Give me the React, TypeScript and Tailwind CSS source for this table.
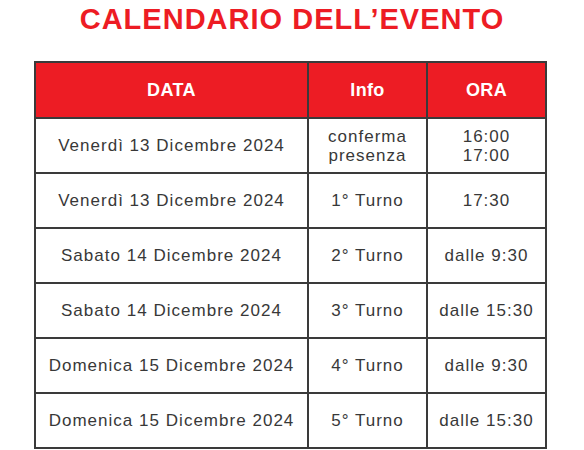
import React from "react";

const rows: { date: string; info: string[]; ora: string[] }[] = [
  { date: "Venerdì 13 Dicembre 2024", info: ["conferma", "presenza"], ora: ["16:00", "17:00"] },
  { date: "Venerdì 13 Dicembre 2024", info: ["1° Turno"], ora: ["17:30"] },
  { date: "Sabato 14 Dicembre 2024", info: ["2° Turno"], ora: ["dalle 9:30"] },
  { date: "Sabato 14 Dicembre 2024", info: ["3° Turno"], ora: ["dalle 15:30"] },
  { date: "Domenica 15 Dicembre 2024", info: ["4° Turno"], ora: ["dalle 9:30"] },
  { date: "Domenica 15 Dicembre 2024", info: ["5° Turno"], ora: ["dalle 15:30"] },
];

export default function App() {
  return (
    <div
      className="w-[584px] h-[450px] bg-white overflow-hidden"
      style={{ fontFamily: '"Liberation Sans", Arial, sans-serif' }}
    >
      <h1 className="pt-[3px] text-center text-[29px] leading-[32px] font-bold text-[#ed1c24] tracking-[0.035em]">
        CALENDARIO DELL’EVENTO
      </h1>
      <table className="ml-[34px] mt-[26px] w-[513px] border-collapse table-fixed">
        <colgroup>
          <col className="w-[273px]" />
          <col className="w-[119px]" />
          <col className="w-[119px]" />
        </colgroup>
        <thead>
          <tr className="h-[56px] bg-[#ed1c24] text-white">
            <th className="border-2 border-[#3a3a3a] text-[18px] font-bold tracking-[0.02em]">DATA</th>
            <th className="border-2 border-[#3a3a3a] text-[18px] font-bold tracking-[0.02em]">Info</th>
            <th className="border-2 border-[#3a3a3a] text-[18px] font-bold tracking-[0.02em]">ORA</th>
          </tr>
        </thead>
        <tbody className="text-[#383838] text-[17px] tracking-[0.06em]">
          {rows.map((r, i) => (
            <tr key={i} className="h-[55px]">
              <td className="border-2 border-[#3a3a3a] text-center">{r.date}</td>
              <td className="border-2 border-[#3a3a3a] text-center leading-[19px]">
                {r.info.map((t, j) => (
                  <div key={j}>{t}</div>
                ))}
              </td>
              <td className="border-2 border-[#3a3a3a] text-center leading-[19px]">
                {r.ora.map((t, j) => (
                  <div key={j}>{t}</div>
                ))}
              </td>
            </tr>
          ))}
        </tbody>
      </table>
    </div>
  );
}
